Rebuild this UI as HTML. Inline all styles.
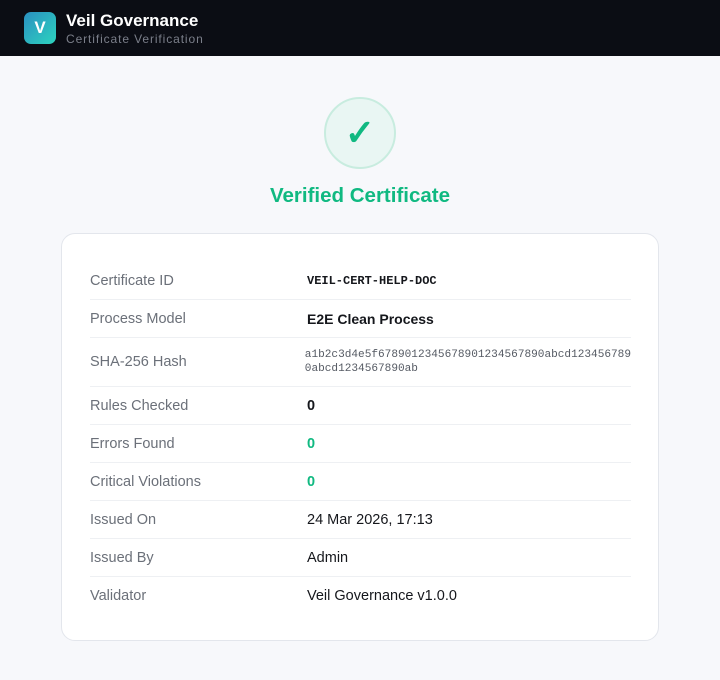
<!DOCTYPE html>
<html><head><meta charset="utf-8"><style>
*{margin:0;padding:0;box-sizing:border-box}
body{width:720px;height:680px;background:#f7f8fb;font-family:"Liberation Sans",sans-serif;overflow:hidden}
.hd{height:56px;background:#0b0d14;position:relative}
.logo{position:absolute;left:24px;top:12px;width:32px;height:32px;border-radius:7px;background:linear-gradient(135deg,#2a8fc0,#2dd4bf);color:#fff;font-weight:bold;font-size:17px;text-align:center;line-height:32px}
.t1{position:absolute;left:66px;top:11px;color:#fff;font-weight:bold;font-size:17px}
.t2{position:absolute;left:66px;top:32px;color:#7b7f8a;font-size:12px;letter-spacing:.9px}
.circ{position:absolute;left:324px;top:97px;width:72px;height:72px;border-radius:50%;background:#e9f6f3;border:2px solid #c8ecdf;color:#10b981;font-size:36px;font-weight:bold;text-align:center;line-height:68px}
.title{position:absolute;top:184px;width:720px;text-align:center;color:#10b981;font-weight:bold;font-size:20.5px}
.card{position:absolute;left:61px;top:233px;width:598px;height:408px;background:#fff;border:1px solid #e3e6ec;border-radius:14px;padding:28px 27px 0 28px}
.row{display:flex;align-items:center;height:38px;border-bottom:1px solid #eef0f3}
.row:last-child{border-bottom:none}
.l{width:217px;color:#6b7079;font-size:14.5px}
.v{color:#15171c;font-size:14.5px}
.mono{font-family:"Liberation Mono",monospace}
.g{color:#10b981;font-weight:bold}
</style></head><body>
<div class="hd"><div class="logo">V</div><div class="t1">Veil Governance</div><div class="t2">Certificate Verification</div></div>
<div class="circ">✓</div>
<div class="title">Verified Certificate</div>
<div class="card">
<div class="row"><div class="l">Certificate ID</div><div class="v mono" style="font-size:12px;font-weight:bold">VEIL-CERT-HELP-DOC</div></div>
<div class="row"><div class="l">Process Model</div><div class="v" style="font-weight:bold;font-size:14px">E2E Clean Process</div></div>
<div class="row" style="height:49px"><div class="l">SHA-256 Hash</div><div class="mono" style="font-size:11.1px;color:#555a63;line-height:14px">a1b2c3d4e5f6789012345678901234567890abcd123456789<br>0abcd1234567890ab</div></div>
<div class="row"><div class="l">Rules Checked</div><div class="v" style="font-weight:bold">0</div></div>
<div class="row"><div class="l">Errors Found</div><div class="v g">0</div></div>
<div class="row"><div class="l">Critical Violations</div><div class="v g">0</div></div>
<div class="row"><div class="l">Issued On</div><div class="v">24 Mar 2026, 17:13</div></div>
<div class="row"><div class="l">Issued By</div><div class="v">Admin</div></div>
<div class="row"><div class="l">Validator</div><div class="v">Veil Governance v1.0.0</div></div>
</div>
</body></html>
